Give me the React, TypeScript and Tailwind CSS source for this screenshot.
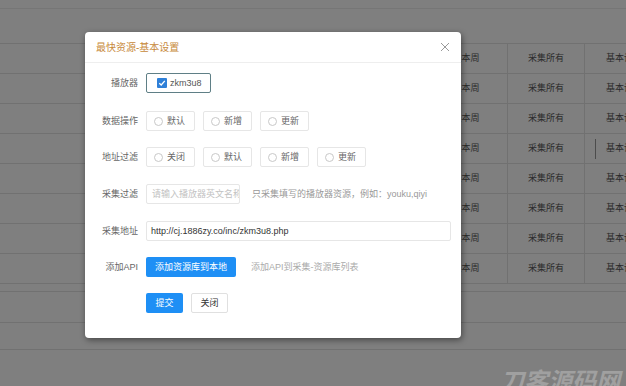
import React from "react";

const FONT = { fontFamily: '"Liberation Sans", "Noto Sans CJK SC", sans-serif' };

function BgRow({ text = true, cursor = false }: { text?: boolean; cursor?: boolean }) {
  return (
    <div className="flex h-[30px] border-t border-[#e2e2e2]">
      <div className="w-[415px] shrink-0" />
      <div className="w-[92px] shrink-0 border-l border-[#e2e2e2] flex items-center justify-center text-[9px] text-[#555]">
        {text ? "采集本周" : ""}
      </div>
      <div className="w-[77px] shrink-0 border-l border-[#e2e2e2] flex items-center justify-center text-[9px] text-[#555]">
        {text ? "采集所有" : ""}
      </div>
      <div className="w-[92px] shrink-0 border-l border-[#e2e2e2] flex items-center text-[9px] text-[#555] pl-[10px] gap-[10px] whitespace-nowrap">
        {cursor ? <span className="w-px h-[20px] bg-[#999] shrink-0" /> : <span className="w-px shrink-0" />}
        <span>{text ? "基本设置" : ""}</span>
      </div>
    </div>
  );
}

function Radio({ label }: { label: string }) {
  return (
    <div className="w-[49px] h-[20px] border border-[#e6e6e6] rounded-[2px] flex items-center pl-[7px] gap-[4px] bg-white">
      <span className="w-[9px] h-[9px] rounded-full border border-[#c8c8c8]" />
      <span className="text-[9px] text-[#666] leading-none">{label}</span>
    </div>
  );
}

function Label({ children }: { children: React.ReactNode }) {
  return <div className="w-[53px] text-right text-[9px] text-[#666] mr-[8px] leading-none">{children}</div>;
}

export default function App() {
  return (
    <div className="relative w-[626px] h-[386px] overflow-hidden bg-white" style={FONT}>
      {/* background table */}
      <div className="flex flex-col">
        <div className="h-[9px] border-b border-[#ececec]" />
        <div className="h-[34px]" />
        <BgRow />
        <BgRow />
        <BgRow />
        <BgRow cursor />
        <BgRow />
        <BgRow />
        <BgRow />
        <BgRow />
        <div className="h-[8px] border-t border-[#e2e2e2]" />
        <div className="h-[31px] border-t border-[#e2e2e2]" />
        <div className="h-[27px] border-t border-[#e2e2e2]" />
        <div className="h-[36px] border-t border-[#e2e2e2]" />
      </div>

      {/* overlay */}
      <div className="absolute inset-0 bg-black/50" />

      {/* modal */}
      <div className="absolute left-[85px] top-[32px] w-[376px] h-[306px] bg-white rounded-[4px] shadow-[1px_2px_6px_rgba(0,0,0,0.45)] flex flex-col">
        <div className="h-[31px] border-b border-[#eeeeee] flex items-center justify-between pl-[11px] pr-[10px]">
          <span className="text-[10px] text-[#c7893a] leading-none pt-[1px]">最快资源-基本设置</span>
          <svg width="10" height="10" viewBox="0 0 10 10" className="mr-[1px]">
            <path d="M1 1 L9 9 M9 1 L1 9" stroke="#9a9a9a" strokeWidth="1" fill="none" />
          </svg>
        </div>

        <div className="flex flex-col pt-[10px]">
          {/* 播放器 */}
          <div className="flex items-center h-[20px]">
            <Label>播放器</Label>
            <div className="w-[65px] h-[20px] border border-[#5f7f86] rounded-[2px] flex items-center pl-[10px] gap-[3px]">
              <span className="w-[10px] h-[10px] bg-[#2f80d8] rounded-[1px] flex items-center justify-center">
                <svg width="8" height="8" viewBox="0 0 8 8">
                  <path d="M1.3 4.2 L3.2 6 L6.8 1.8" stroke="#fff" strokeWidth="1.3" fill="none" />
                </svg>
              </span>
              <span className="text-[9px] text-[#555] leading-none">zkm3u8</span>
            </div>
          </div>

          {/* 数据操作 */}
          <div className="flex items-center h-[20px] mt-[18px]">
            <Label>数据操作</Label>
            <div className="flex gap-[8px]">
              <Radio label="默认" />
              <Radio label="新增" />
              <Radio label="更新" />
            </div>
          </div>

          {/* 地址过滤 */}
          <div className="flex items-center h-[20px] mt-[16px]">
            <Label>地址过滤</Label>
            <div className="flex gap-[8px]">
              <Radio label="关闭" />
              <Radio label="默认" />
              <Radio label="新增" />
              <Radio label="更新" />
            </div>
          </div>

          {/* 采集过滤 */}
          <div className="flex items-center h-[20px] mt-[17px]">
            <Label>采集过滤</Label>
            <div className="w-[94px] h-[20px] border border-[#e6e6e6] rounded-[2px] flex items-center pl-[5px] overflow-hidden whitespace-nowrap">
              <span className="text-[9px] text-[#c2c2c2] leading-none">请输入播放器英文名称</span>
            </div>
            <span className="ml-[12px] text-[9px] text-[#999] leading-none">只采集填写的播放器资源，例如：youku,qiyi</span>
          </div>

          {/* 采集地址 */}
          <div className="flex items-center h-[20px] mt-[17px]">
            <Label>采集地址</Label>
            <div className="w-[305px] h-[20px] border border-[#e6e6e6] rounded-[2px] flex items-center pl-[4px]">
              <span className="text-[9px] text-[#333] leading-none">http://cj.1886zy.co/inc/zkm3u8.php</span>
            </div>
          </div>

          {/* 添加API */}
          <div className="flex items-center h-[20px] mt-[16px]">
            <Label>添加API</Label>
            <div className="w-[90px] h-[20px] bg-[#1e8ff5] rounded-[2px] flex items-center justify-center">
              <span className="text-[9px] text-white leading-none">添加资源库到本地</span>
            </div>
            <span className="ml-[15px] text-[9px] text-[#aaa] leading-none">添加API到采集-资源库列表</span>
          </div>

          {/* buttons */}
          <div className="flex items-center h-[20px] mt-[16px] pl-[61px] gap-[8px]">
            <div className="w-[37px] h-[20px] bg-[#1e8ff5] rounded-[2px] flex items-center justify-center">
              <span className="text-[9px] text-white leading-none">提交</span>
            </div>
            <div className="w-[37px] h-[20px] bg-white border border-[#e0e0e0] rounded-[2px] flex items-center justify-center">
              <span className="text-[9px] text-[#333] leading-none">关闭</span>
            </div>
          </div>
        </div>
      </div>

      {/* watermark */}
      <div className="absolute left-[500px] top-[368px] text-[24px] font-bold italic text-[#a0a0a0] leading-none" style={{ fontFamily: '"Noto Sans CJK SC", sans-serif' }}>
        刀客源码网
      </div>
    </div>
  );
}
